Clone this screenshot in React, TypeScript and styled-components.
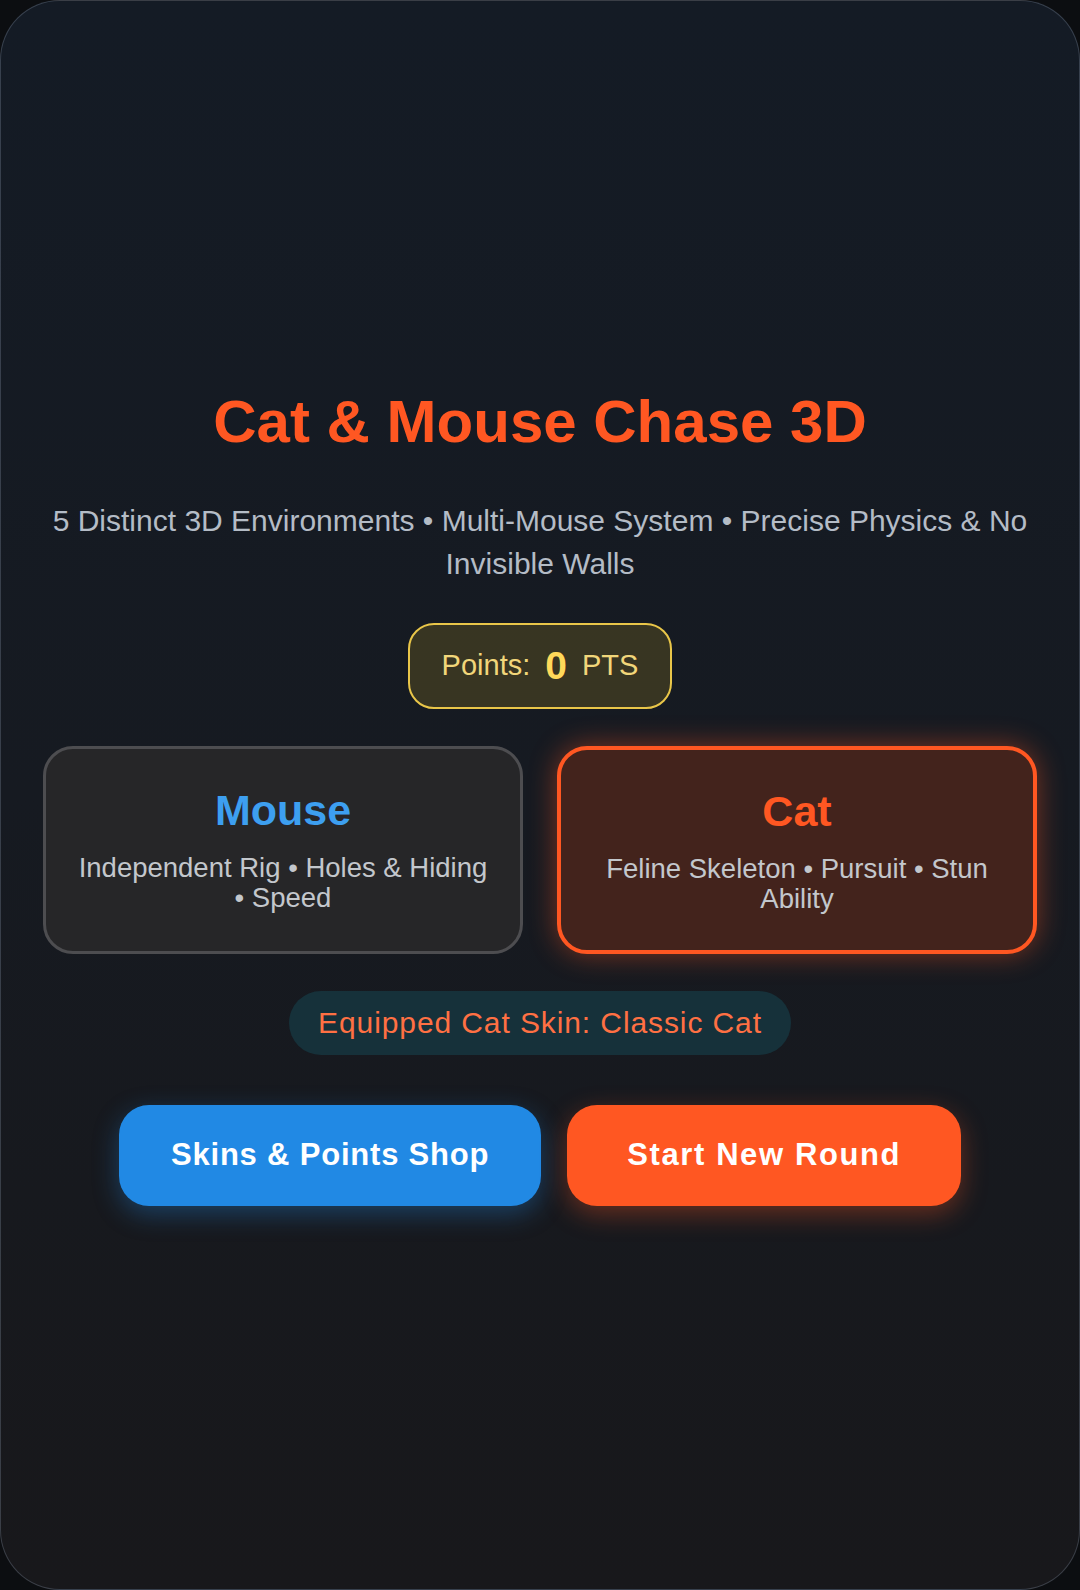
import styled, { createGlobalStyle } from 'styled-components'

const GlobalStyle = createGlobalStyle`
  html, body {
    margin: 0;
    padding: 0;
    background: #0c0e11;
  }
  * {
    box-sizing: border-box;
  }
`

const Screen = styled.main`
  min-height: 100vh;
  display: flex;
  flex-direction: column;
  align-items: center;
  justify-content: center;
  padding: 2px 42px 0;
  border-radius: 60px;
  border: 1.5px solid rgba(148, 163, 184, 0.28);
  background: linear-gradient(180deg, #141b25 0%, #161a21 50%, #18181b 100%);
  font-family: 'Liberation Sans', Arial, sans-serif;
  overflow: hidden;
`

const Title = styled.h1`
  margin: 0;
  font-size: 60px;
  line-height: 69px;
  font-weight: 700;
  color: #ff5722;
  text-align: center;
`

const Subtitle = styled.p`
  margin: 43px 0 0;
  font-size: 30px;
  line-height: 43px;
  color: #b4bcc6;
  text-align: center;
`

const PointsBadge = styled.div`
  margin-top: 38px;
  height: 86px;
  display: inline-flex;
  align-items: center;
  gap: 15px;
  padding: 0 32px;
  border: 2px solid #e9c649;
  border-radius: 26px;
  background: rgba(255, 206, 40, 0.15);
  color: #f1d67a;
  font-size: 29px;
`

const PointsValue = styled.span`
  font-size: 39px;
  font-weight: 700;
  color: #ffd95a;
`

const RoleGrid = styled.div`
  margin-top: 37px;
  width: 100%;
  display: grid;
  grid-template-columns: 1fr 1fr;
  gap: 34px;
`

const RoleCard = styled.div<{ $active?: boolean }>`
  border-radius: 30px;
  padding: 37px 30px 36px;
  text-align: center;
  border: ${(p) => (p.$active ? '4px solid #ff5722' : '3px solid #4d4d50')};
  background: ${(p) => (p.$active ? '#43231c' : '#262628')};
  box-shadow: ${(p) => (p.$active ? '0 0 28px rgba(255, 87, 34, 0.45)' : 'none')};
`

const RoleName = styled.h2<{ $color: string }>`
  margin: 0;
  font-size: 43px;
  line-height: 48px;
  font-weight: 700;
  color: ${(p) => p.$color};
`

const RoleInfo = styled.p`
  margin: 19px 0 0;
  font-size: 27.5px;
  line-height: 30px;
  color: #c3c7cc;
`

const SkinPill = styled.div`
  margin-top: 37px;
  height: 64px;
  display: flex;
  align-items: center;
  padding: 0 29px;
  border-radius: 32px;
  background: #16313a;
  color: #ff7043;
  font-size: 30px;
  letter-spacing: 0.9px;
`

const ButtonRow = styled.div`
  margin-top: 50px;
  display: flex;
  gap: 26px;
`

const ActionButton = styled.button<{ $tone: 'blue' | 'orange' }>`
  height: 101px;
  padding: ${(p) => (p.$tone === 'blue' ? '0 52px' : '0 60px')};
  border: none;
  border-radius: 30px;
  font-family: inherit;
  font-size: 31px;
  font-weight: 700;
  letter-spacing: ${(p) => (p.$tone === 'blue' ? '0.8px' : '1.6px')};
  color: #ffffff;
  cursor: pointer;
  background: ${(p) => (p.$tone === 'blue' ? '#2189e4' : '#ff5722')};
  box-shadow: ${(p) =>
    p.$tone === 'blue'
      ? '0 8px 26px rgba(33, 137, 228, 0.35)'
      : '0 8px 26px rgba(255, 87, 34, 0.35)'};
`

export default function App() {
  return (
    <>
      <GlobalStyle />
      <Screen>
        <Title>Cat &amp; Mouse Chase 3D</Title>
        <Subtitle>
          5 Distinct 3D Environments • Multi-Mouse System • Precise Physics &amp; No Invisible Walls
        </Subtitle>
        <PointsBadge>
          <span>Points:</span>
          <PointsValue>0</PointsValue>
          <span>PTS</span>
        </PointsBadge>
        <RoleGrid>
          <RoleCard>
            <RoleName $color="#3d9ff0">Mouse</RoleName>
            <RoleInfo>Independent Rig • Holes &amp; Hiding • Speed</RoleInfo>
          </RoleCard>
          <RoleCard $active>
            <RoleName $color="#ff5722">Cat</RoleName>
            <RoleInfo>Feline Skeleton • Pursuit • Stun Ability</RoleInfo>
          </RoleCard>
        </RoleGrid>
        <SkinPill>Equipped Cat Skin: Classic Cat</SkinPill>
        <ButtonRow>
          <ActionButton $tone="blue">Skins &amp; Points Shop</ActionButton>
          <ActionButton $tone="orange">Start New Round</ActionButton>
        </ButtonRow>
      </Screen>
    </>
  )
}
